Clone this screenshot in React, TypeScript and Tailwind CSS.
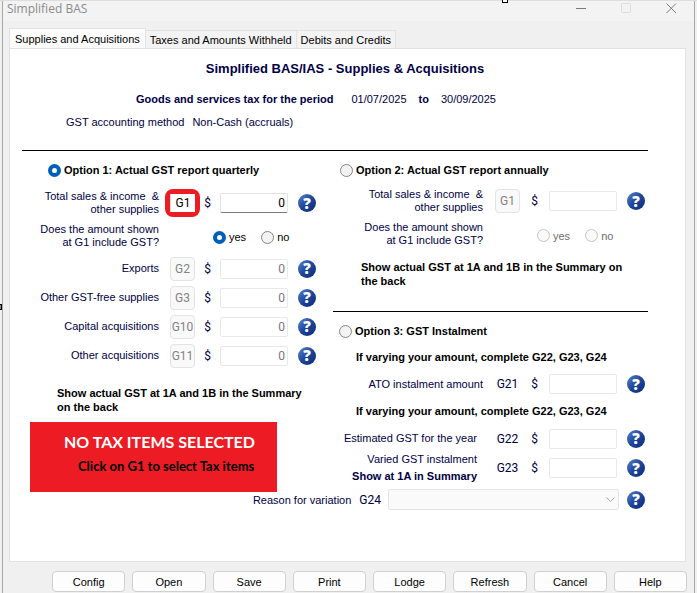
import React from "react";

const tabs = ["Supplies and Acquisitions", "Taxes and Amounts Withheld", "Debits and Credits"];
const actions = ["Config", "Open", "Save", "Print", "Lodge", "Refresh", "Cancel", "Help"];

function HelpDot({ topic }: { topic: string }) {
  return (
    <button
      type="button"
      aria-label={`Help: ${topic}`}
      className="flex size-[18px] shrink-0 items-center justify-center rounded-full bg-linear-to-br from-[#5b84cc] via-[#1f469a] to-[#0a2a78] font-['Open_Sans',sans-serif] text-[15px] leading-none font-extrabold text-white"
    >
      ?
    </button>
  );
}

function Code({ children, active, plain }: { children: string; active?: boolean; plain?: boolean }) {
  if (plain) return <span className="w-[25px] shrink-0 text-center font-['Roboto',sans-serif] text-[12px]">{children}</span>;
  if (active)
    return (
      <div className="-m-[5px] flex shrink-0 rounded-lg border-[5px] border-[#ed1c24]">
        <button
          type="button"
          className="h-[18px] w-[25px] border-l border-[#d8d8d8] bg-white text-center font-['Roboto',sans-serif] text-[12px] text-black"
        >
          {children}
        </button>
      </div>
    );
  return (
    <button
      type="button"
      disabled
      className="h-[24px] w-[25px] shrink-0 rounded-[4px] border border-[#e3e3e3] bg-[#f9f9f9] text-center font-['Roboto',sans-serif] text-[12px] text-[#838383]"
    >
      {children}
    </button>
  );
}

type AmountProps = {
  label: React.ReactNode;
  code: string;
  id: string;
  value?: string;
  active?: boolean;
  plain?: boolean;
  height: string;
  labelPad?: string;
  dollar?: string;
};

function AmountRow({ label, code, id, value = "", active, plain, height, labelPad = "pr-[11px]", dollar = "w-[25px]" }: AmountProps) {
  return (
    <div className={`flex items-center ${height}`}>
      <label htmlFor={id} className={`flex-1 text-right leading-[13px] ${labelPad}`}>
        {label}
      </label>
      <Code active={active} plain={plain}>{code}</Code>
      <span className={`text-center font-['Roboto',sans-serif] text-[12px] ${dollar}`}>$</span>
      <input
        id={id}
        type="text"
        defaultValue={value}
        disabled={!active}
        className={`h-[20px] w-[68px] rounded-[2px] border bg-white px-[2px] text-right font-['Roboto',sans-serif] text-[12px] ${
          active ? "border-[#e3e3e3] border-b-[#7a7a7a] text-black" : "border-[#e8e8e8] text-[#777777]"
        }`}
      />
      <div className="ml-[10px] flex">
        <HelpDot topic={code} />
      </div>
    </div>
  );
}

function Radio({ name, label, checked, disabled }: { name: string; label: string; checked?: boolean; disabled?: boolean }) {
  return (
    <label className={`flex items-center gap-[3px] ${disabled ? "text-[#6d6d6d]" : "text-black"}`}>
      <input
        type="radio"
        name={name}
        defaultChecked={checked}
        disabled={disabled}
        className="size-[13px] shrink-0 appearance-none rounded-full border border-[#858585] bg-[#f3f3f3] checked:border-4 checked:border-[#005fb8] checked:bg-white disabled:border-[#c3c3c3] disabled:bg-[#fafafa]"
      />
      {label}
    </label>
  );
}

function OptionTitle({ label, checked }: { label: string; checked?: boolean }) {
  return (
    <div className="flex h-[38px] items-center font-bold">
      <Radio name="option" label={label} checked={checked} />
    </div>
  );
}

function IncludeGst({ name, checked, disabled, height, end }: { name: string; checked?: boolean; disabled?: boolean; height: string; end: string }) {
  return (
    <fieldset className={`flex items-center ${height}`}>
      <div className="flex-1 text-right leading-[13px]">
        Does the amount shown
        <br />
        at G1 include GST?
      </div>
      <div className={`flex gap-[15px] pt-[3px] ${end}`}>
        <Radio name={name} label="yes" checked={checked} disabled={disabled} />
        <Radio name={name} label="no" disabled={disabled} />
      </div>
    </fieldset>
  );
}

const totalLabel = (
  <>
    Total sales &amp; income&nbsp; &amp;
    <br />
    other supplies
  </>
);

export default function App() {
  return (
    <div className="relative flex min-h-screen flex-col border-t border-[#dedede] bg-[#f0f0f0] pr-[2px] pl-[2px] font-['Liberation_Sans',Arial,sans-serif] text-[11px] leading-[14px] text-[#000045]">
      <span aria-hidden="true" className="absolute -top-[4px] left-[72%] size-[6px] border border-black bg-white" />
      <span aria-hidden="true" className="absolute top-[303px] -left-[4px] size-[6px] border border-black bg-[#8a8a8a]" />
      <div className="flex flex-1 flex-col border-x border-[#a8a8a8] bg-[#f0f0f0]">
        <header className="flex h-[20px] items-start justify-between bg-[#f3f3f3] pl-1 text-[#8b8b8b]">
          <h1 className="font-['Open_Sans',sans-serif] text-[12px] leading-[15px]">Simplified BAS</h1>
          <div className="flex gap-[34px] pr-[17px]">
            <button type="button" aria-label="Minimize" className="pt-[2px]">
              <svg width="11" height="11" viewBox="0 0 11 11" stroke="#7b7b7b"><path d="M0 5.5H10" /></svg>
            </button>
            <button type="button" aria-label="Maximize" disabled className="pt-[2px]">
              <svg width="11" height="11" viewBox="0 0 11 11" fill="none" stroke="#dcdcdc"><rect x=".5" y=".5" width="9" height="9" rx="1" /></svg>
            </button>
            <button type="button" aria-label="Close" className="pt-[2px]">
              <svg width="11" height="11" viewBox="0 0 11 11" stroke="#7b7b7b"><path d="M.5 .5L10 10M10 .5L.5 10" /></svg>
            </button>
          </div>
        </header>

        <div role="tablist" className="mt-[7px] ml-[6px] flex h-[20px] items-end text-black">
          {tabs.map((tab, i) => (
            <button
              key={tab}
              type="button"
              role="tab"
              aria-selected={i === 0}
              className={
                i === 0
                  ? "h-[20px] border border-b-0 border-[#e2e2e2] bg-[#fcfcfc] px-[5px] whitespace-nowrap"
                  : "h-[18px] border border-b-0 border-l-0 border-[#e2e2e2] bg-[#f3f3f3] px-1 whitespace-nowrap"
              }
            >
              {tab}
            </button>
          ))}
        </div>

        <main className="ml-[6px] mr-[8px] flex-1 border border-[#e2e2e2] bg-white pt-[12px] pr-[37px] pl-[12px]">
          <h2 className="pl-[20px] text-center text-[13px] leading-[16px] font-bold">
            Simplified BAS/IAS - Supplies &amp; Acquisitions
          </h2>
          <div className="mt-[15px] flex items-center pl-[114px]">
            <h3 className="font-bold">Goods and services tax for the period</h3>
            <span className="ml-[18px]">01/07/2025</span>
            <b className="mx-3">to</b>
            <span>30/09/2025</span>
          </div>
          <div className="mt-[9px] flex gap-2 pl-[44px]">
            <span>GST accounting method</span>
            <span>Non-Cash (accruals)</span>
          </div>

          <div className="mt-[21px] grid grid-cols-[1fr_315px] border-t border-black">
            <section className="relative pr-[17px]">
              <div className="pl-[26px]">
                <OptionTitle label="Option 1: Actual GST report quarterly" checked />
              </div>
              <AmountRow id="q-g1" label={totalLabel} code="G1" value="0" active height="h-[28px]" />
              <IncludeGst name="q-gst" checked height="h-[37px]" end="ml-[54px] w-[103px]" />
              <AmountRow id="q-g2" label="Exports" code="G2" value="0" height="h-[29px]" />
              <AmountRow id="q-g3" label="Other GST-free supplies" code="G3" value="0" height="h-[29px]" />
              <AmountRow id="q-g10" label="Capital acquisitions" code="G10" value="0" height="h-[29px]" />
              <AmountRow id="q-g11" label="Other acquisitions" code="G11" value="0" height="h-[29px]" />
              <p className="mt-[16px] pl-[35px] font-bold text-black">
                Show actual GST at 1A and 1B in the Summary
                <br />
                on the back
              </p>
              <div className="absolute top-[271px] left-2 h-[70px] w-[247px] bg-[#ed1c24] pt-[10px] font-['Lato',sans-serif] font-bold">
                <p className="pl-[34px] text-[16px] leading-[20px] text-white">NO TAX ITEMS SELECTED</p>
                <p className="pt-[7px] pl-[48px] text-[13px] text-black">Click on G1 to select Tax items</p>
              </div>
            </section>

            <section className="pr-[3px]">
              <div className="pl-[7px]">
                <OptionTitle label="Option 2: Actual GST report annually" />
              </div>
              <AmountRow id="a-g1" label={totalLabel} code="G1" height="h-[24px]" labelPad="pr-[12px]" dollar="w-[29px]" />
              <IncludeGst name="a-gst" disabled height="h-[42px]" end="ml-[54px] w-[108px]" />
              <p className="mt-[5px] pl-[28px] font-bold text-black">
                Show actual GST at 1A and 1B in the Summary on
                <br />
                the back
              </p>
              <div className="mt-[23px] -mr-[3px] border-t border-black pl-[6px]">
                <OptionTitle label="Option 3: GST Instalment" />
              </div>
              <p className="pl-[23px] font-bold text-black">If varying your amount, complete G22, G23, G24</p>
              <AmountRow id="g21" label="ATO instalment amount" code="G21" plain height="h-[40px]" labelPad="pr-[12px]" dollar="w-[29px]" />
              <p className="pl-[23px] font-bold text-black">If varying your amount, complete G22, G23, G24</p>
              <AmountRow id="g22" label="Estimated GST for the year" code="G22" plain height="h-[41px]" labelPad="pr-[18px]" dollar="w-[29px]" />
              <AmountRow
                id="g23"
                label={
                  <>
                    <span className="block pb-[4px]">Varied GST instalment</span>
                    <b className="block">Show at 1A in Summary</b>
                  </>
                }
                code="G23"
                plain
                height="h-[18px]"
                labelPad="pr-[18px]"
                dollar="w-[29px]"
              />
            </section>
          </div>

          <div className="mt-[12px] flex items-center justify-end pr-[3px]">
            <label htmlFor="g24" className="flex gap-2 pr-[7px]">
              <span>Reason for variation</span>
              <span className="font-['Roboto',sans-serif] text-[12px]">G24</span>
            </label>
            <div className="relative flex">
              <select id="g24" disabled className="h-[21px] w-[231px] appearance-none rounded-[2px] border border-[#e5e5e5] bg-[#fafafa]" />
              <svg className="pointer-events-none absolute top-[8px] right-[4px]" width="9" height="6" viewBox="0 0 9 6" fill="none" stroke="#a9a9a9">
                <path d="M.5 .5L4.500 4.500L8.500 .5" />
              </svg>
            </div>
            <div className="ml-2 flex">
              <HelpDot topic="G24" />
            </div>
          </div>
        </main>

        <footer className="mt-[9px] mr-[7px] mb-px ml-[49px] grid grid-cols-8 gap-[7px] text-black">
          {actions.map((action) => (
            <button key={action} type="button" className="h-[21px] rounded-[4px] border border-[#d0d0d0] bg-[#fdfdfd]">
              {action}
            </button>
          ))}
        </footer>
      </div>
    </div>
  );
}
